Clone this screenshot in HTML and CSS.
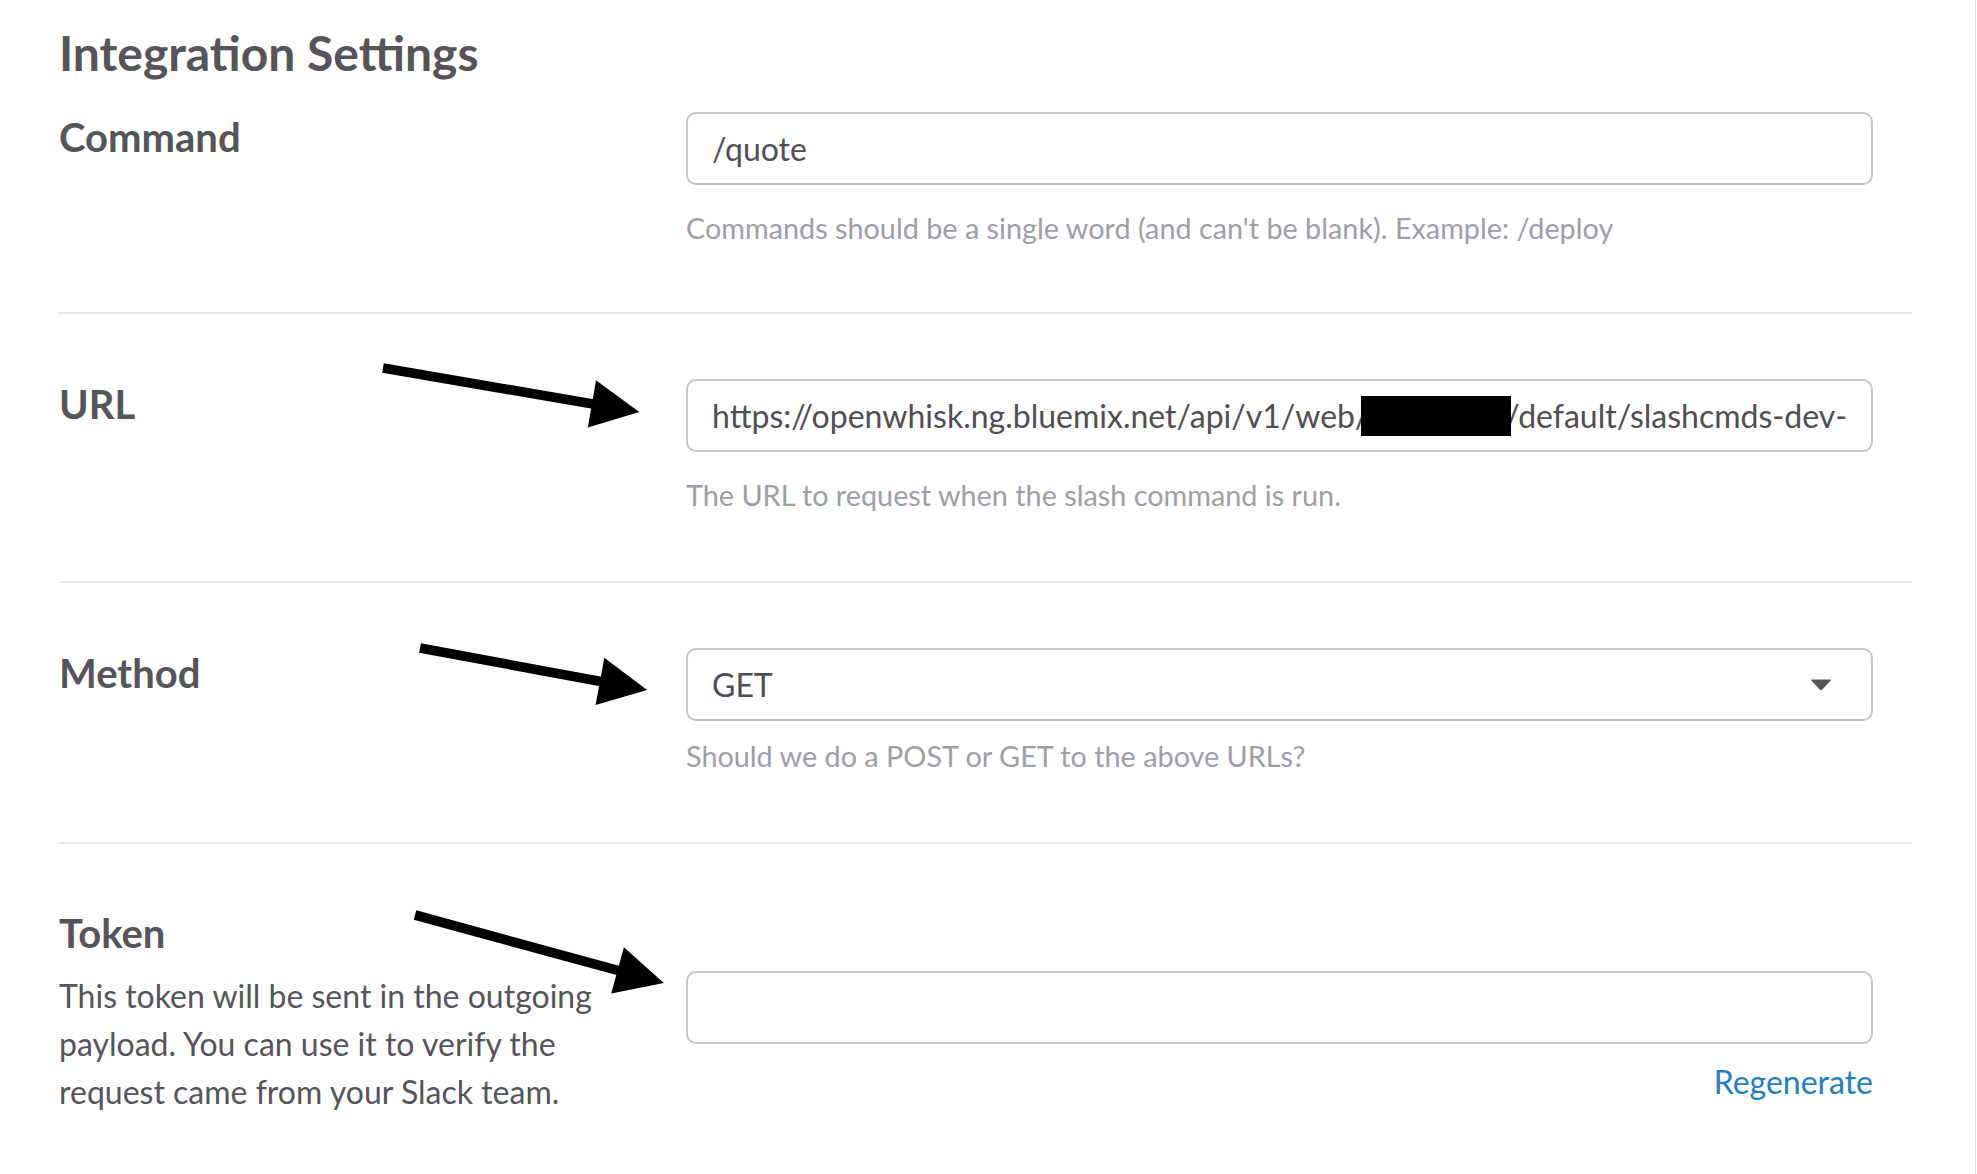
FILE: index.html
```html
<!DOCTYPE html>
<html lang="en">
<head>
<meta charset="utf-8">
<title>Integration Settings</title>
<link rel="stylesheet" href="styles.css">
</head>
<body>
<main class="page">
  <h1 class="title">Integration Settings</h1>

  <section class="row row-first">
    <div class="label-col">
      <h2 class="label">Command</h2>
    </div>
    <div class="field-col">
      <input class="field" type="text" value="/quote">
      <p class="hint">Commands should be a single word (and can't be blank). Example: /deploy</p>
    </div>
  </section>

  <section class="row">
    <div class="label-col">
      <h2 class="label">URL</h2>
    </div>
    <div class="field-col">
      <div class="field"><div class="field-text">https://openwhisk.ng.bluemix.net/api/v1/web/<span class="redact"></span>/default/slashcmds-dev-quote</div></div>
      <p class="hint">The URL to request when the slash command is run.</p>
    </div>
  </section>

  <section class="row">
    <div class="label-col">
      <h2 class="label">Method</h2>
    </div>
    <div class="field-col">
      <div class="field select">
        <span class="field-text">GET</span>
        <svg class="caret" width="22" height="13" viewBox="0 0 22 13"><path d="M2 1.5 H20 Q21.5 1.5 20.5 2.8 L12.3 11.5 Q11 12.8 9.7 11.5 L1.5 2.8 Q0.5 1.5 2 1.5 Z" fill="#545358"/></svg>
      </div>
      <p class="hint hint-tight">Should we do a POST or GET to the above URLs?</p>
    </div>
  </section>

  <section class="row row-last">
    <div class="label-col">
      <h2 class="label">Token</h2>
      <p class="desc">This token will be sent in the outgoing payload. You can use it to verify the request came from your Slack team.</p>
    </div>
    <div class="field-col token-col">
      <input class="field" type="text" value="">
      <a class="regen" href="#">Regenerate</a>
    </div>
  </section>

  <svg class="arrows" width="1977" height="1174" viewBox="0 0 1977 1174">
    <g transform="translate(383 368) rotate(9.75)">
      <rect x="0" y="-4.8" width="216" height="9.6" fill="#000"/>
      <polygon points="212,-24 260,0 212,24" fill="#000"/>
    </g>
    <g transform="translate(420 648) rotate(10.5)">
      <rect x="0" y="-4.8" width="188" height="9.6" fill="#000"/>
      <polygon points="183,-24 231,0 183,24" fill="#000"/>
    </g>
    <g transform="translate(415 915) rotate(15.3)">
      <rect x="0" y="-4.8" width="214" height="9.6" fill="#000"/>
      <polygon points="210,-24 258,0 210,24" fill="#000"/>
    </g>
  </svg>
</main>
</body>
</html>
```

FILE: styles.css
```css
html, body {
  margin: 0;
  padding: 0;
  background: #fff;
}

body {
  font-family: Lato, "Liberation Sans", sans-serif;
  color: #555459;
}

.page {
  position: relative;
  width: 1976px;
  height: 1174px;
  box-sizing: border-box;
  border-right: 1px solid #dcdcdc;
  padding: 25px 0 0 59px;
  overflow: hidden;
}

.title {
  margin: 0;
  font-size: 48px;
  line-height: 56px;
  font-weight: 700;
  color: #555459;
}

.row {
  display: grid;
  grid-template-columns: 627px 1187px;
  width: 1853px;
  padding: 65px 0 68px;
  border-bottom: 2px solid #e8e8e8;
}

.row-first {
  padding-top: 31px;
  padding-bottom: 66px;
}

.row-last {
  border-bottom: none;
  padding-top: 64px;
}

.label-col {
  display: flex;
  flex-direction: column;
}

.label {
  margin: -1px 0 0;
  font-size: 40px;
  line-height: 52px;
  font-weight: 700;
  color: #555459;
}

.desc {
  margin: 13px 0 0;
  width: 560px;
  font-size: 32px;
  line-height: 48px;
  color: #555459;
}

.field-col {
  display: flex;
  flex-direction: column;
}

.field {
  display: flex;
  align-items: center;
  box-sizing: border-box;
  width: 100%;
  height: 73px;
  margin: 0;
  padding: 0 24px;
  border: 2px solid #c7c7c7;
  border-radius: 10px;
  background: #fff;
  font-family: Lato, "Liberation Sans", sans-serif;
  font-size: 32px;
  color: #4f4e53;
  outline: none;
}

.field-text {
  flex: 1;
  overflow: hidden;
  white-space: nowrap;
  line-height: 40px;
}

.redact {
  display: inline-block;
  width: 150px;
  height: 48px;
  margin: -14px -6px -14px -8px;
  vertical-align: middle;
  background: #000;
  position: relative;
  top: 1px;
}

.select {
  justify-content: space-between;
  padding-right: 39px;
}

.caret {
  display: block;
  flex: none;
}

.hint {
  margin: 25px 0 0;
  font-size: 28.8px;
  line-height: 36px;
  color: #9e9ea6;
}

.hint-tight {
  margin-top: 17px;
}

.token-col {
  padding-top: 63px;
}

.regen {
  align-self: flex-end;
  margin-top: 18px;
  font-size: 32px;
  line-height: 40px;
  color: #1f7fc0;
  text-decoration: none;
}

.arrows {
  position: absolute;
  top: 0;
  left: 0;
  pointer-events: none;
}
```
